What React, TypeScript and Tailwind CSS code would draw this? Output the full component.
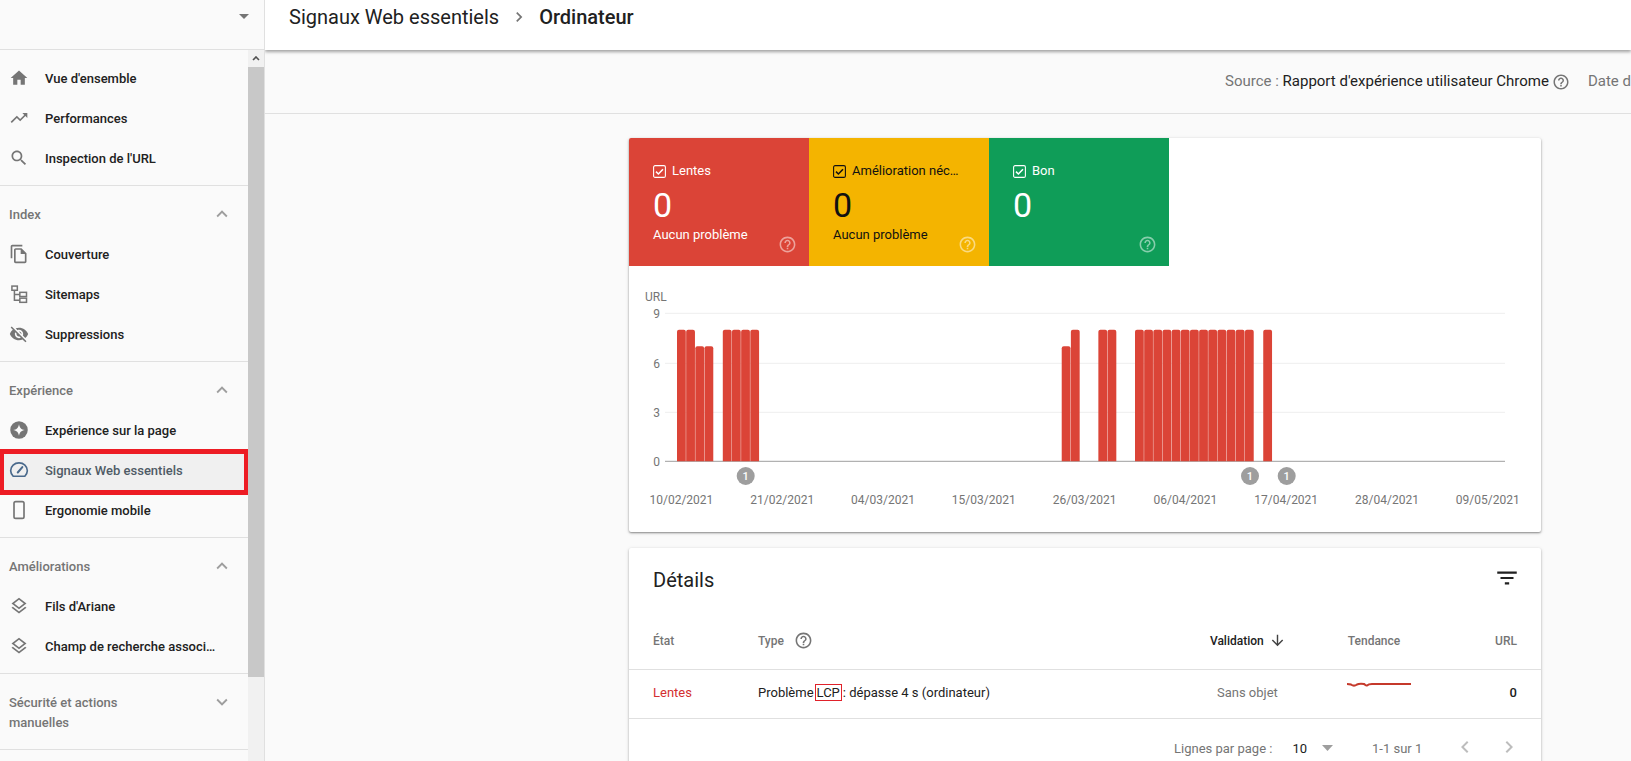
import React from "react";

const P: Record<string, string> = {
  home: "M10 20v-6h4v6h5v-8h3L12 3 2 12h3v8z",
  trend: "M16 6l2.29 2.29-4.88 4.88-4-4L2 16.59 3.41 18l6-6 4 4 6.3-6.29L22 12V6z",
  search: "M15.5 14h-.79l-.28-.27C15.41 12.59 16 11.11 16 9.5 16 5.91 13.09 3 9.5 3S3 5.91 3 9.5 5.91 16 9.5 16c1.61 0 3.09-.59 4.23-1.57l.27.28v.79l5 4.99L20.49 19l-4.99-5zm-6 0C7.01 14 5 11.99 5 9.5S7.01 5 9.5 5 14 7.01 14 9.5 11.99 14 9.5 14z",
  copy: "M16 1H4c-1.1 0-2 .9-2 2v14h2V3h12V1zm-1 4H8c-1.1 0-1.99.9-1.99 2L6 21c0 1.1.89 2 1.99 2H19c1.1 0 2-.9 2-2V11l-6-6zM8 21V7h6v5h5v9H8z",
  off: "M12 7c2.76 0 5 2.24 5 5 0 .65-.13 1.26-.36 1.83l2.92 2.92c1.51-1.26 2.7-2.89 3.43-4.75-1.73-4.39-6-7.5-11-7.5-1.4 0-2.74.25-3.98.7l2.16 2.16C10.74 7.13 11.35 7 12 7zM2 4.27l2.28 2.28.46.46C3.08 8.3 1.78 10.02 1 12c1.73 4.39 6 7.5 11 7.5 1.55 0 3.03-.3 4.38-.84l.42.42L19.73 22 21 20.73 3.27 3 2 4.27zM7.53 9.8l1.55 1.55c-.05.21-.08.43-.08.65 0 1.66 1.34 3 3 3 .22 0 .44-.03.65-.08l1.55 1.55c-.67.33-1.41.53-2.2.53-2.76 0-5-2.24-5-5 0-.79.2-1.53.53-2.2zm4.31-.78l3.15 3.15.02-.16c0-1.66-1.34-3-3-3l-.17.01z",
  layers: "M11.99 18.54l-7.37-5.73L3 14.07l9 7 9-7-1.63-1.27-7.38 5.74zM12 16l7.36-5.73L21 9l-9-7-9 7 1.63 1.27L12 16zm0-11.47L17.74 9 12 13.47 6.26 9 12 4.53z",
  up: "M12 8l-6 6 1.41 1.41L12 10.83l4.59 4.58L18 14z",
  down: "M16.59 8.59L12 13.17 7.41 8.59 6 10l6 6 6-6z",
  help: "M11 18h2v-2h-2v2zm1-16C6.48 2 2 6.48 2 12s4.48 10 10 10 10-4.48 10-10S17.52 2 12 2zm0 18c-4.41 0-8-3.59-8-8s3.59-8 8-8 8 3.59 8 8-3.59 8-8 8zm0-14c-2.21 0-4 1.79-4 4h2c0-1.1.9-2 2-2s2 .9 2 2c0 2-3 1.75-3 5h2c0-2.25 3-2.5 3-5 0-2.21-1.79-4-4-4z",
  filter: "M10 18h4v-2h-4v2zM3 6v2h18V6H3zm3 7h12v-2H6v2z",
  arrow: "M20 12l-1.41-1.41L13 16.17V4h-2v12.17l-5.58-5.59L4 12l8 8 8-8z",
  left: "M15.41 7.41L14 6l-6 6 6 6 1.41-1.41L10.83 12z",
  right: "M10 6L8.59 7.41 13.17 12l-4.58 4.59L10 18l6-6z",
};

function Ico({ n, className }: { n: string; className: string }) {
  return (
    <svg viewBox="0 0 24 24" fill="currentColor" className={className}>
      <path d={P[n]} />
    </svg>
  );
}

function SideIcon({ kind }: { kind: string }) {
  if (kind === "map")
    return (
      <svg viewBox="0 0 24 24" fill="none" stroke="currentColor" strokeWidth="1.8" className="w-5 h-5 text-[#757575] shrink-0">
        <rect x="3.5" y="2.5" width="6.5" height="5" />
        <rect x="13" y="10" width="8" height="5" />
        <rect x="13" y="17" width="8" height="5" />
        <path d="M6.5 7.5V19.5H13M6.5 12.5H13" />
      </svg>
    );
  if (kind === "star")
    return (
      <svg viewBox="0 0 24 24" className="w-5 h-5 shrink-0">
        <circle cx="12" cy="12" r="10.5" fill="#757575" />
        <path d="M12 5C12.8 9.4 14.6 11.2 19 12C14.6 12.8 12.8 14.6 12 19C11.2 14.6 9.4 12.8 5 12C9.4 11.2 11.2 9.4 12 5Z" fill="#fafafa" />
      </svg>
    );
  if (kind === "gauge")
    return (
      <svg viewBox="0 0 24 24" fill="none" stroke="#4a6a8c" strokeWidth="2" className="w-5 h-5 shrink-0">
        <path d="M5 19.5H19C20.6 17.8 22 15.5 22 13C22 7.5 17.5 3.5 12 3.5S2 7.5 2 13C2 15.5 3.4 17.8 5 19.5Z" />
        <path d="M10.5 15L16 8.5" strokeLinecap="round" strokeWidth="2.4" />
      </svg>
    );
  if (kind === "phone")
    return (
      <svg viewBox="0 0 24 24" fill="none" stroke="#757575" strokeWidth="2" className="w-5 h-5 shrink-0">
        <rect x="6" y="2" width="12" height="20" rx="2" />
      </svg>
    );
  return <Ico n={kind} className="w-5 h-5 text-[#757575] shrink-0" />;
}

function Item({ icon, label, active }: { icon: string; label: string; active?: boolean }) {
  return (
    <div className={`relative h-10 flex items-center pl-[9px] gap-4 ${active ? "bg-[#f0f0f0]" : ""}`}>
      <SideIcon kind={icon} />
      <span className={`text-[13px] pt-[2px] font-medium whitespace-nowrap ${active ? "text-[#4f5b66]" : "text-[#212121]"}`}>{label}</span>
      {active && <span className="absolute z-10 left-0 -right-px -top-px -bottom-[5px] border-[5px] border-l-4 border-[#ed1c24]" />}
    </div>
  );
}

function Head({ label, open = true }: { label: string; open?: boolean }) {
  return (
    <div className="h-12 pt-2 pl-[9px] pr-[15px] flex items-center justify-between">
      <span className="text-[13px] pt-[2px] font-medium text-[#757575]">{label}</span>
      <Ico n={open ? "up" : "down"} className="w-[22px] h-[22px] text-[#9e9e9e]" />
    </div>
  );
}

function Sidebar() {
  return (
    <aside className="w-[265px] shrink-0 border-r border-[#e0e0e0] flex flex-col bg-[#fafafa]">
      <div className="h-[50px] shrink-0 border-b border-[#e0e0e0] pt-[14px] pl-[239px]">
        <svg viewBox="0 0 10 5" className="w-[10px] h-[5px]"><path d="M0 0H10L5 5Z" fill="#757575" /></svg>
      </div>
      <div className="flex flex-1 min-h-0">
        <nav className="w-[248px] shrink-0 overflow-hidden">
          <div className="pt-2 pb-[7px] border-b border-[#e0e0e0]">
            <Item icon="home" label="Vue d'ensemble" />
            <Item icon="trend" label="Performances" />
            <Item icon="search" label="Inspection de l'URL" />
          </div>
          <div className="pb-[7px] border-b border-[#e0e0e0]">
            <Head label="Index" />
            <Item icon="copy" label="Couverture" />
            <Item icon="map" label="Sitemaps" />
            <Item icon="off" label="Suppressions" />
          </div>
          <div className="pb-[7px] border-b border-[#e0e0e0]">
            <Head label="Expérience" />
            <Item icon="star" label="Expérience sur la page" />
            <Item icon="gauge" label="Signaux Web essentiels" active />
            <Item icon="phone" label="Ergonomie mobile" />
          </div>
          <div className="pb-[7px] border-b border-[#e0e0e0]">
            <Head label="Améliorations" />
            <Item icon="layers" label="Fils d'Ariane" />
            <Item icon="layers" label="Champ de recherche associ…" />
          </div>
          <div className="h-[76px] border-b border-[#e0e0e0] pl-[9px] pr-[15px] pt-[19px] flex justify-between items-start">
            <span className="text-[13px] font-medium text-[#757575] leading-5 w-[140px]">Sécurité et actions manuelles</span>
            <Ico n="down" className="w-[22px] h-[22px] text-[#9e9e9e] -mt-[2px]" />
          </div>
        </nav>
        <div className="w-4 shrink-0 bg-[#f1f1f1] flex flex-col">
          <div className="h-[17px] flex items-center justify-center">
            <svg viewBox="0 0 8 5" className="w-2 h-[5px]"><path d="M1 4L4 1L7 4" fill="none" stroke="#505050" strokeWidth="1.6" /></svg>
          </div>
          <div className="h-[610px] bg-[#c8c8c8]" />
        </div>
      </div>
    </aside>
  );
}

const bars: [number, number][] = [
  [0, 8], [1, 8], [2, 7], [3, 7], [5, 8], [6, 8], [7, 8], [8, 8], [42, 7], [43, 8], [46, 8], [47, 8],
  ...Array.from({ length: 13 }, (_, i) => [50 + i, 8] as [number, number]),
  [64, 8],
];
const AXIS = 195.3;
const STEP = 148 / 9;

function Chart() {
  return (
    <svg width="912" height="224" viewBox="0 0 912 224" className="block">
      <text x="16" y="35" fontSize="12" fill="#757575" fontFamily="Roboto">URL</text>
      {[[47.3, "9"], [97.3, "6"], [146.3, "3"], [AXIS, "0"]].map(([y, t]) => (
        <g key={t as string}>
          <line x1="36" x2="876" y1={y as number} y2={y as number} stroke={t === "0" ? "#9e9e9e" : "#eeeeee"} strokeWidth="1" />
          <text x="31" y={(y as number) + 5} fontSize="12" fill="#757575" textAnchor="end" fontFamily="Roboto">{t}</text>
        </g>
      ))}
      {bars.map(([i, v]) => {
        const x = 48 + i * 9.16;
        const top = AXIS - v * STEP;
        return (
          <path key={i} d={`M${x} ${AXIS}V${top + 2}Q${x} ${top} ${x + 2} ${top}H${x + 6.8}Q${x + 8.8} ${top} ${x + 8.8} ${top + 2}V${AXIS}Z`} fill="#db4437" />
        );
      })}
      {[116.7, 621, 657.7].map((x) => (
        <g key={x}>
          <circle cx={x} cy="210" r="9" fill="#9e9e9e" />
          <text x={x} y="214" fontSize="11" fontWeight="500" fill="#fff" textAnchor="middle" fontFamily="Roboto">1</text>
        </g>
      ))}
    </svg>
  );
}

function Tile({ bg, dark, label, sub }: { bg: string; dark?: boolean; label: string; sub?: boolean }) {
  const c = dark ? "#111111" : "#ffffff";
  return (
    <div className={`${bg} ${dark ? "text-[#111111]" : "text-white"} w-[180px] h-[128px] shrink-0 relative pl-6 pt-[23px]`}>
      <div className="flex items-center gap-[6px] h-5">
        <svg viewBox="0 0 13 13" className="w-[13px] h-[13px] shrink-0" fill="none" stroke={c}>
          <rect x="0.6" y="0.6" width="11.8" height="11.8" rx="1.5" strokeWidth="1.1" />
          <path d="M3 6.6L5.4 9L10 4.2" strokeWidth="1.5" />
        </svg>
        <span className="text-[13px] whitespace-nowrap">{label}</span>
      </div>
      <div className="text-[34px] leading-[40px] mt-[4px]">0</div>
      {sub && <div className="text-[13px] leading-5">Aucun problème</div>}
      <Ico n="help" className="absolute right-[12px] bottom-[12px] w-[19px] h-[19px] text-white/50" />
    </div>
  );
}

export default function App() {
  const dates = ["10/02/2021", "21/02/2021", "04/03/2021", "15/03/2021", "26/03/2021", "06/04/2021", "17/04/2021", "28/04/2021", "09/05/2021"];
  return (
    <div className="w-[1631px] h-[761px] overflow-hidden flex bg-[#fafafa]" style={{ fontFamily: "Roboto, sans-serif" }}>
      <Sidebar />
      <main className="flex-1 min-w-0 flex flex-col overflow-hidden">
        <header className="h-[50px] shrink-0 bg-white shadow-[0_2px_3px_rgba(0,0,0,0.35)] relative z-10 pl-6 pb-4 flex items-center text-[20px] text-[#212121] whitespace-nowrap">
          <span>Signaux Web essentiels</span>
          <Ico n="right" className="w-5 h-5 text-[#757575] mx-[10px]" />
          <span className="font-medium">Ordinateur</span>
        </header>
        <div className="h-[64px] shrink-0 border-b border-[#e0e0e0] flex items-center pl-[960px] text-[15px] whitespace-nowrap">
          <span className="text-[#757575]">Source :&nbsp;</span>
          <span className="text-[#212121]">Rapport d'expérience utilisateur Chrome</span>
          <Ico n="help" className="w-[18px] h-[18px] text-[#757575] ml-[3px] shrink-0" />
          <span className="text-[#757575] ml-[18px]">Date de la dernière mise à jour</span>
        </div>
        <div className="ml-[364px] w-[912px] pt-6 shrink-0">
          <section className="bg-white rounded-[2px] shadow-[0_1px_2px_rgba(0,0,0,0.4),0_1px_4px_rgba(0,0,0,0.12)] h-[394px] overflow-hidden">
            <div className="flex">
              <Tile bg="bg-[#db4437]" label="Lentes" sub />
              <Tile bg="bg-[#f4b400]" dark label="Amélioration néc…" sub />
              <Tile bg="bg-[#0f9d58]" label="Bon" />
            </div>
            <Chart />
            <div className="flex pl-[2px] text-[12px] text-[#757575] h-5 items-center">
              {dates.map((d) => (
                <span key={d} className="w-[100.8px] text-center">{d}</span>
              ))}
            </div>
          </section>
          <section className="mt-4 bg-white rounded-[2px] shadow-[0_1px_2px_rgba(0,0,0,0.3),0_1px_4px_rgba(0,0,0,0.12)]">
            <div className="h-16 pl-6 pr-[21px] flex items-center justify-between">
              <span className="text-[20px] text-[#212121]">Détails</span>
              <Ico n="filter" className="w-[26px] h-[26px] text-[#212121] -mt-1" />
            </div>
            <div className="h-[58px] border-b border-[#e0e0e0] flex items-center pl-6 pr-6 text-[12px] font-medium text-[#757575]">
              <span className="w-[105px]">État</span>
              <span>Type</span>
              <Ico n="help" className="w-[19px] h-[19px] ml-[10px]" />
              <span className="ml-[397px] text-[#212121]">Validation</span>
              <Ico n="arrow" className="w-[17px] h-[17px] ml-[5px] text-[#424242]" />
              <span className="ml-[62px]">Tendance</span>
              <span className="ml-auto">URL</span>
            </div>
            <div className="h-[49px] border-b border-[#e0e0e0] flex items-center pl-6 pr-6 pb-[3px] text-[13px]">
              <span className="w-[105px] text-[#d32f2f]">Lentes</span>
              <span className="text-[#212121] flex items-center whitespace-nowrap">
                Problème
                <span className="border border-[#e0212a] ml-[1px] mr-[1px] px-[1px] h-[17px] leading-[15px]">LCP</span>
                : dépasse 4 s (ordinateur)
              </span>
              <span className="ml-[227px] text-[#757575]">Sans objet</span>
              <svg viewBox="0 0 64 6" className="w-16 h-[6px] ml-[69px] -mt-4 shrink-0" fill="none">
                <path d="M0 2C3 2 3 2 4 2.5C6 4 8 4 10 2.5C11 2 14 1.7 17 2C18 2.5 19 4 20 3.5C21 2.5 22 2 25 2H64" stroke="#c5392b" strokeWidth="2" />
              </svg>
              <span className="ml-auto font-medium text-[#212121]">0</span>
            </div>
            <div className="h-[60px] flex items-start pt-5 text-[13px] text-[#757575] relative whitespace-nowrap pl-[545px]">
              <span>Lignes par page :</span>
              <span className="ml-[20px] text-[#212121]">10</span>
              <svg viewBox="0 0 11 6" className="w-[11px] h-[6px] ml-[15px] mt-[6px]"><path d="M0 0H11L5.5 6Z" fill="#9e9e9e" /></svg>
              <span className="ml-[39px]">1-1 sur 1</span>
              <Ico n="left" className="w-6 h-6 text-[#bdbdbd] ml-[31px] -mt-[4px]" />
              <Ico n="right" className="w-6 h-6 text-[#bdbdbd] ml-5 -mt-[4px]" />
            </div>
          </section>
        </div>
      </main>
    </div>
  );
}
